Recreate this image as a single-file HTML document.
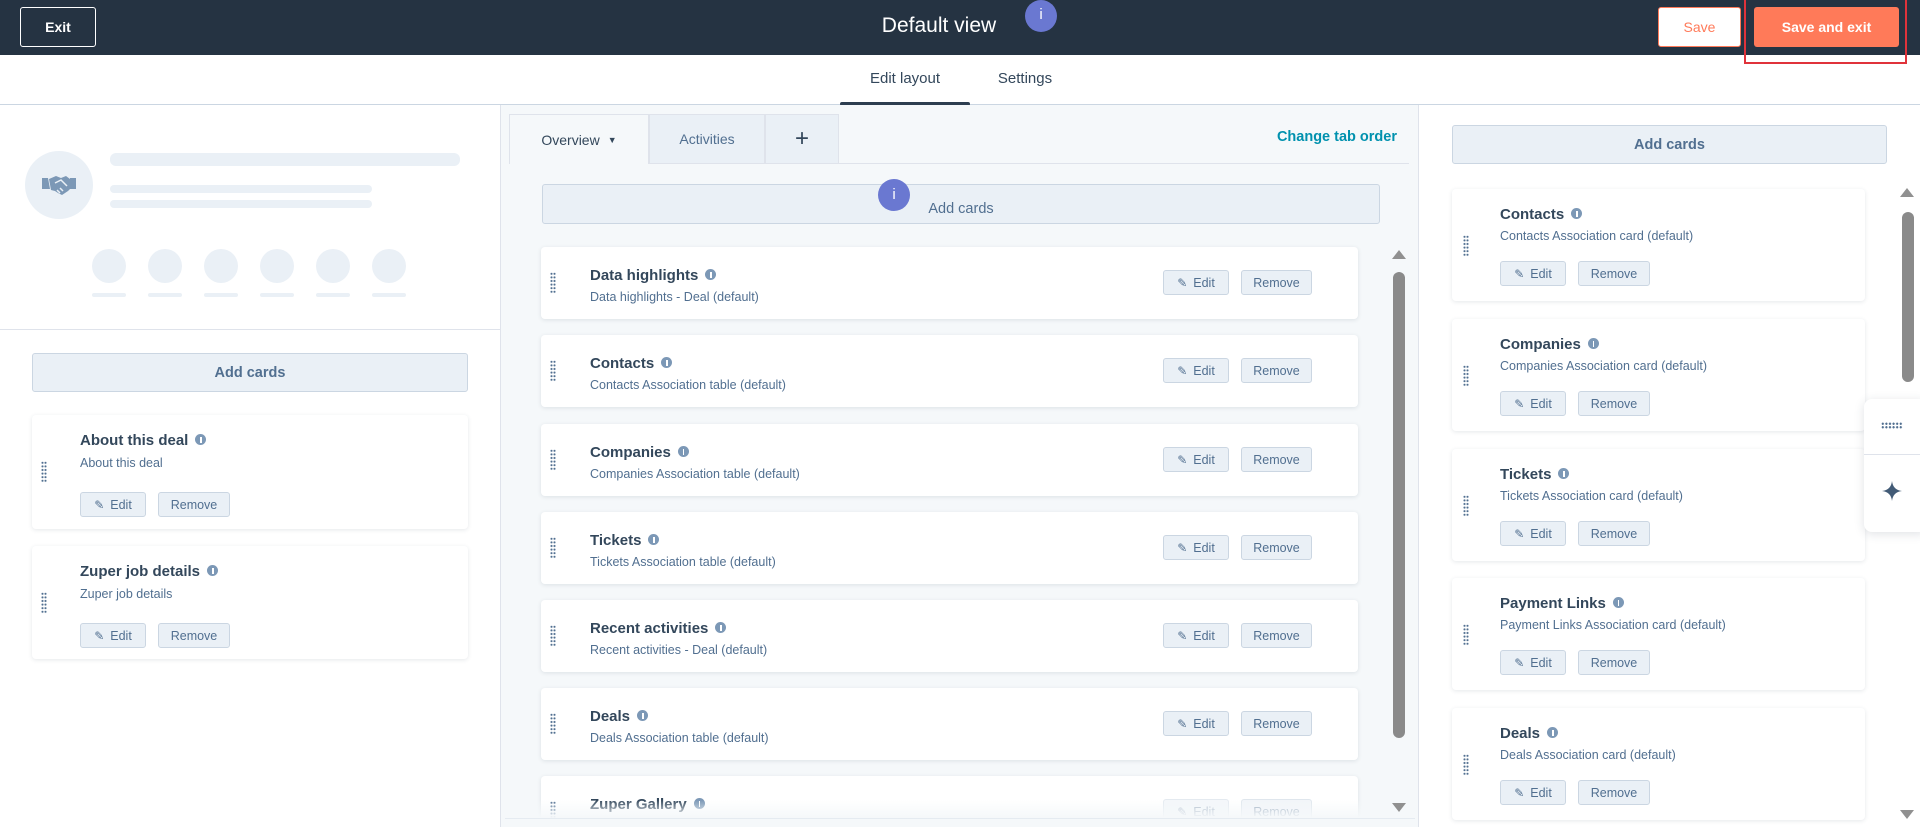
<!DOCTYPE html>
<html><head><meta charset="utf-8"><style>
*{box-sizing:border-box;margin:0;padding:0}
body{width:1920px;height:827px;overflow:hidden;background:#fff;font-family:"Liberation Sans",sans-serif;color:#33475b;position:relative}
.a{position:absolute}
.top{left:0;top:0;width:1920px;height:55px;background:#253342}
.btn{position:absolute;display:flex;align-items:center;justify-content:center;font-size:14px;background:#eaf0f6;border:1px solid #cbd6e2;border-radius:3px;color:#33475b}
.card{position:absolute;background:#fff;border-radius:4px;box-shadow:0 1px 4px rgba(45,62,80,.12)}
.t{position:absolute;font-weight:bold;font-size:15px;color:#33475b;white-space:nowrap}
.t i{display:inline-block;width:11px;height:11px;border-radius:50%;background:#7c98b6;margin-left:7px;vertical-align:0;position:relative}
.t i:after{content:"";position:absolute;left:5px;top:3px;width:1.5px;height:6px;background:#fff}
.s{position:absolute;font-size:12.5px;color:#516f90;white-space:nowrap}
.dh{position:absolute;width:6px;height:22px;background-image:radial-gradient(circle,#516f90 0.9px,transparent 1.2px);background-size:3px 3.6px}
.e,.r{position:absolute;height:25px;font-size:12.5px;color:#516f90;background:#eaf0f6;border:1px solid #cbd6e2;border-radius:3px;display:flex;align-items:center;justify-content:center}
.e:before{content:"✎";font-size:12px;margin-right:6px;color:#516f90}
.bar{position:absolute;background:#eaf0f6;border-radius:6px}
.circ{position:absolute;width:34px;height:34px;border-radius:50%;background:#eaf0f6}
.ul{position:absolute;width:34px;height:4px;border-radius:2px;background:#eaf0f6}
</style></head><body>
<div class="a top"></div>
<div class="a" style="left:20px;top:7px;width:76px;height:40px;border:1px solid #fff;border-radius:3px;color:#fff;font-weight:bold;font-size:14px;display:flex;align-items:center;justify-content:center">Exit</div>
<div class="a" style="left:839px;top:14px;width:200px;text-align:center;color:#fff;font-size:21px">Default view</div>
<div class="a" style="left:1025px;top:0px;width:32px;height:32px;border-radius:50%;background:#6a78d1;color:#fff;font-size:15px;text-align:center;line-height:30px">i</div>
<div class="a" style="left:1658px;top:7px;width:83px;height:40px;background:#fff;border:1px solid #ff7a59;border-radius:3px;color:#ff7a59;font-size:14px;display:flex;align-items:center;justify-content:center">Save</div>
<div class="a" style="left:1754px;top:7px;width:145px;height:40px;background:#ff7a59;border-radius:3px;color:#fff;font-weight:bold;font-size:14px;display:flex;align-items:center;justify-content:center">Save and exit</div>
<div class="a" style="left:1744px;top:0;width:163px;height:64px;border:2px solid #e0333b;border-top:none"></div>
<div class="a" style="left:0;top:104px;width:1920px;height:1px;background:#cbd6e2"></div>
<div class="a" style="left:840px;top:70px;width:130px;text-align:center;font-size:15px;color:#33475b">Edit layout</div>
<div class="a" style="left:840px;top:102px;width:130px;height:4px;border-radius:2px;background:#2d3e50"></div>
<div class="a" style="left:985px;top:70px;width:80px;text-align:center;font-size:15px;color:#33475b">Settings</div>

<!-- left -->
<div class="a" style="left:25px;top:151px;width:68px;height:68px;border-radius:50%;background:#eaf0f6;display:flex;align-items:center;justify-content:center">
<svg width="34" height="22" viewBox="0 0 34 22"><path d="M0 4h6l2 11H0z M28 4h6v11h-6z M7 5l7-3 5 2 5-2 4 3 1 9-3 3-6 4-4-2-3-2-4-1z" fill="#7c98b6"/><path d="M13 9l6-3 6 6M15 16l3 3M18 14l3 3" stroke="#eaf0f6" stroke-width="1.5" fill="none"/></svg></div>
<div class="bar" style="left:110px;top:153px;width:350px;height:13px"></div>
<div class="bar" style="left:110px;top:185px;width:262px;height:8px;border-radius:4px"></div>
<div class="bar" style="left:110px;top:200px;width:262px;height:8px;border-radius:4px"></div>
<div class="circ" style="left:92px;top:249px"></div><div class="circ" style="left:148px;top:249px"></div><div class="circ" style="left:204px;top:249px"></div><div class="circ" style="left:260px;top:249px"></div><div class="circ" style="left:316px;top:249px"></div><div class="circ" style="left:372px;top:249px"></div>
<div class="ul" style="left:92px;top:293px"></div><div class="ul" style="left:148px;top:293px"></div><div class="ul" style="left:204px;top:293px"></div><div class="ul" style="left:260px;top:293px"></div><div class="ul" style="left:316px;top:293px"></div><div class="ul" style="left:372px;top:293px"></div>
<div class="a" style="left:0;top:329px;width:500px;height:1px;background:#dfe3eb"></div>
<div class="btn" style="left:32px;top:353px;width:436px;height:39px;font-weight:bold;color:#516f90;font-size:14.5px">Add cards</div>
<div class="card" style="left:32px;top:415px;width:436px;height:114px">
 <div class="dh" style="left:9px;top:46px"></div>
 <div class="t" style="left:48px;top:17px">About this deal<i></i></div>
 <div class="s" style="left:48px;top:41px">About this deal</div>
 <div class="e" style="left:48px;top:77px;width:66px">Edit</div>
 <div class="r" style="left:126px;top:77px;width:72px">Remove</div>
</div>
<div class="card" style="left:32px;top:546px;width:436px;height:113px">
 <div class="dh" style="left:9px;top:46px"></div>
 <div class="t" style="left:48px;top:17px">Zuper job details<i></i></div>
 <div class="s" style="left:48px;top:41px">Zuper job details</div>
 <div class="e" style="left:48px;top:77px;width:66px">Edit</div>
 <div class="r" style="left:126px;top:77px;width:72px">Remove</div>
</div>

<!-- middle -->
<div class="a" style="left:500px;top:105px;width:919px;height:722px;background:#f5f8fa;border-left:1px solid #dfe3eb;border-right:1px solid #dfe3eb;overflow:hidden">
 <div class="a" style="left:8px;top:9px;width:140px;height:50px;background:#f5f8fa;border:1px solid #dfe3eb;border-bottom:none;display:flex;align-items:center;justify-content:center;font-size:14px">Overview <span style="font-size:9px;margin-left:8px">▼</span></div>
 <div class="a" style="left:148px;top:9px;width:116px;height:50px;background:#eaf0f6;border:1px solid #dfe3eb;display:flex;align-items:center;justify-content:center;font-size:14px;color:#516f90">Activities</div>
 <div class="a" style="left:264px;top:9px;width:74px;height:50px;background:#eaf0f6;border:1px solid #dfe3eb;display:flex;align-items:center;justify-content:center;font-size:24px">+</div>
 <div class="a" style="left:338px;top:58px;width:570px;height:1px;background:#dfe3eb"></div>
 <div class="a" style="left:700px;top:24px;width:196px;text-align:right;font-weight:bold;font-size:14.5px;color:#0091ae">Change tab order</div>
 <div class="btn" style="left:41px;top:79px;width:838px;height:40px;color:#516f90;font-size:14.5px;padding-top:10px">Add cards</div>
 <div class="a" style="left:377px;top:74px;width:32px;height:32px;border-radius:50%;background:#6a78d1;color:#fff;font-size:15px;text-align:center;line-height:31px">i</div>

 <div class="card" style="left:40px;top:142px;width:817px;height:72px"><div class="dh" style="left:9px;top:25px"></div><div class="t" style="left:49px;top:20px">Data highlights<i></i></div><div class="s" style="left:49px;top:43px">Data highlights - Deal (default)</div><div class="e" style="left:622px;top:23px;width:66px">Edit</div><div class="r" style="left:700px;top:23px;width:71px">Remove</div></div>
 <div class="card" style="left:40px;top:230px;width:817px;height:72px"><div class="dh" style="left:9px;top:25px"></div><div class="t" style="left:49px;top:20px">Contacts<i></i></div><div class="s" style="left:49px;top:43px">Contacts Association table (default)</div><div class="e" style="left:622px;top:23px;width:66px">Edit</div><div class="r" style="left:700px;top:23px;width:71px">Remove</div></div>
 <div class="card" style="left:40px;top:319px;width:817px;height:72px"><div class="dh" style="left:9px;top:25px"></div><div class="t" style="left:49px;top:20px">Companies<i></i></div><div class="s" style="left:49px;top:43px">Companies Association table (default)</div><div class="e" style="left:622px;top:23px;width:66px">Edit</div><div class="r" style="left:700px;top:23px;width:71px">Remove</div></div>
 <div class="card" style="left:40px;top:407px;width:817px;height:72px"><div class="dh" style="left:9px;top:25px"></div><div class="t" style="left:49px;top:20px">Tickets<i></i></div><div class="s" style="left:49px;top:43px">Tickets Association table (default)</div><div class="e" style="left:622px;top:23px;width:66px">Edit</div><div class="r" style="left:700px;top:23px;width:71px">Remove</div></div>
 <div class="card" style="left:40px;top:495px;width:817px;height:72px"><div class="dh" style="left:9px;top:25px"></div><div class="t" style="left:49px;top:20px">Recent activities<i></i></div><div class="s" style="left:49px;top:43px">Recent activities - Deal (default)</div><div class="e" style="left:622px;top:23px;width:66px">Edit</div><div class="r" style="left:700px;top:23px;width:71px">Remove</div></div>
 <div class="card" style="left:40px;top:583px;width:817px;height:72px"><div class="dh" style="left:9px;top:25px"></div><div class="t" style="left:49px;top:20px">Deals<i></i></div><div class="s" style="left:49px;top:43px">Deals Association table (default)</div><div class="e" style="left:622px;top:23px;width:66px">Edit</div><div class="r" style="left:700px;top:23px;width:71px">Remove</div></div>
 <div class="card" style="left:40px;top:671px;width:817px;height:72px"><div class="dh" style="left:9px;top:25px"></div><div class="t" style="left:49px;top:20px">Zuper Gallery<i></i></div><div class="s" style="left:49px;top:43px">Zuper Gallery (default)</div><div class="e" style="left:622px;top:23px;width:66px;opacity:.5">Edit</div><div class="r" style="left:700px;top:23px;width:71px;opacity:.6">Remove</div></div>
 <div class="a" style="left:4px;top:695px;width:900px;height:18px;background:linear-gradient(rgba(245,248,250,0),#f5f8fa)"></div>
 <div class="a" style="left:4px;top:713px;width:910px;height:9px;background:#f5f8fa;border-top:1px solid #e5ebf1"></div>
 <div class="a" style="left:887px;top:140px;width:20px;height:573px;background:#f5f8fa"></div>
 <div class="a" style="left:891px;top:145px;width:0;height:0;border-left:7px solid transparent;border-right:7px solid transparent;border-bottom:9px solid #909090"></div>
 <div class="a" style="left:892px;top:167px;width:12px;height:466px;border-radius:6px;background:#8a8a8a"></div>
 <div class="a" style="left:891px;top:698px;width:0;height:0;border-left:7px solid transparent;border-right:7px solid transparent;border-top:9px solid #909090"></div>
</div>

<!-- right -->
<div class="btn" style="left:1452px;top:125px;width:435px;height:39px;font-weight:bold;color:#516f90;font-size:14.5px">Add cards</div>
<div class="card" style="left:1452px;top:189px;width:413px;height:112px"><div class="dh" style="left:11px;top:46px"></div><div class="t" style="left:48px;top:17px">Contacts<i></i></div><div class="s" style="left:48px;top:40px">Contacts Association card (default)</div><div class="e" style="left:48px;top:72px;width:66px">Edit</div><div class="r" style="left:126px;top:72px;width:72px">Remove</div></div>
<div class="card" style="left:1452px;top:319px;width:413px;height:112px"><div class="dh" style="left:11px;top:46px"></div><div class="t" style="left:48px;top:17px">Companies<i></i></div><div class="s" style="left:48px;top:40px">Companies Association card (default)</div><div class="e" style="left:48px;top:72px;width:66px">Edit</div><div class="r" style="left:126px;top:72px;width:72px">Remove</div></div>
<div class="card" style="left:1452px;top:449px;width:413px;height:112px"><div class="dh" style="left:11px;top:46px"></div><div class="t" style="left:48px;top:17px">Tickets<i></i></div><div class="s" style="left:48px;top:40px">Tickets Association card (default)</div><div class="e" style="left:48px;top:72px;width:66px">Edit</div><div class="r" style="left:126px;top:72px;width:72px">Remove</div></div>
<div class="card" style="left:1452px;top:578px;width:413px;height:112px"><div class="dh" style="left:11px;top:46px"></div><div class="t" style="left:48px;top:17px">Payment Links<i></i></div><div class="s" style="left:48px;top:40px">Payment Links Association card (default)</div><div class="e" style="left:48px;top:72px;width:66px">Edit</div><div class="r" style="left:126px;top:72px;width:72px">Remove</div></div>
<div class="card" style="left:1452px;top:708px;width:413px;height:112px"><div class="dh" style="left:11px;top:46px"></div><div class="t" style="left:48px;top:17px">Deals<i></i></div><div class="s" style="left:48px;top:40px">Deals Association card (default)</div><div class="e" style="left:48px;top:72px;width:66px">Edit</div><div class="r" style="left:126px;top:72px;width:72px">Remove</div></div>
<div class="a" style="left:1900px;top:188px;width:0;height:0;border-left:7px solid transparent;border-right:7px solid transparent;border-bottom:9px solid #909090"></div>
<div class="a" style="left:1902px;top:212px;width:12px;height:170px;border-radius:6px;background:#8a8a8a"></div>
<div class="a" style="left:1900px;top:810px;width:0;height:0;border-left:7px solid transparent;border-right:7px solid transparent;border-top:9px solid #909090"></div>
<div class="a" style="left:1864px;top:399px;width:60px;height:133px;background:#fff;border-radius:8px 0 0 8px;box-shadow:0 2px 10px rgba(45,62,80,.15)"></div>
<div class="a" style="left:1864px;top:454px;width:56px;height:1px;background:#dfe3eb"></div>
<div class="a" style="left:1881px;top:422px;width:22px;height:7px;background-image:radial-gradient(circle,#516f90 1px,transparent 1.3px);background-size:3.6px 3.5px"></div>
<svg class="a" style="left:1882px;top:481px" width="20" height="20" viewBox="0 0 20 20"><path d="M10 0 Q11 9 20 10 Q11 11 10 20 Q9 11 0 10 Q9 9 10 0z" fill="#425b76"/></svg>
</body></html>
